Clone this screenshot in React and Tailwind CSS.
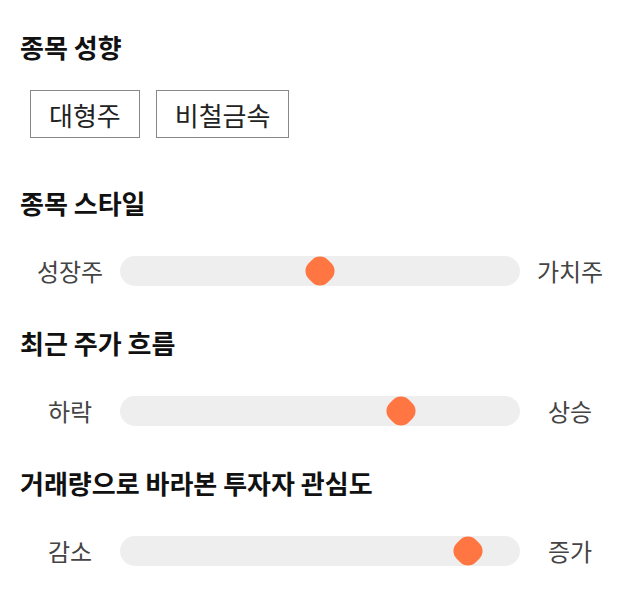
const SLIDERS = [
  { title: '종목 스타일', left: '성장주', right: '가치주', value: 50 },
  { title: '최근 주가 흐름', left: '하락', right: '상승', value: 72 },
  { title: '거래량으로 바라본 투자자 관심도', left: '감소', right: '증가', value: 90 },
]

const TAGS = ['대형주', '비철금속']

function Heading({ children, className = '' }) {
  return (
    <h2 className={`h-[30px] leading-[30px] text-[26px] font-bold text-[#111] ${className}`}>
      {children}
    </h2>
  )
}

function Slider({ left, right, value }) {
  // thumb is 30px wide, travels inside the 400px track
  const offset = 15 + (value / 100) * 370
  return (
    <div className="flex items-center h-[30px] mt-[38px]">
      <span className="w-[100px] text-center text-[24px] text-[#444]">{left}</span>
      <div className="relative flex-1 h-[30px] rounded-full bg-[#eeeeee]">
        <span
          className="absolute top-1/2 w-[27px] h-[27px] -translate-x-1/2 -translate-y-1/2 rotate-45 rounded-[11px] bg-[#ff7642]"
          style={{ left: offset }}
        />
      </div>
      <span className="w-[100px] text-center text-[24px] text-[#444]">{right}</span>
    </div>
  )
}

export default function App() {
  return (
    <div className="w-[640px] h-[606px] bg-white px-5 pt-[32px] font-['Noto_Sans_CJK_KR',sans-serif]">
      <Heading>종목 성향</Heading>
      <div className="flex gap-4 mt-[28px] ml-[10px]">
        {TAGS.map(tag => (
          <span
            key={tag}
            className="h-[48px] flex items-center px-[18px] border border-[#888] text-[26px] text-[#222]"
          >
            {tag}
          </span>
        ))}
      </div>

      {SLIDERS.map((s, i) => (
        <div key={s.title}>
          <Heading className={i === 0 ? 'mt-[50px]' : 'mt-[42px]'}>{s.title}</Heading>
          <Slider left={s.left} right={s.right} value={s.value} />
        </div>
      ))}
    </div>
  )
}
